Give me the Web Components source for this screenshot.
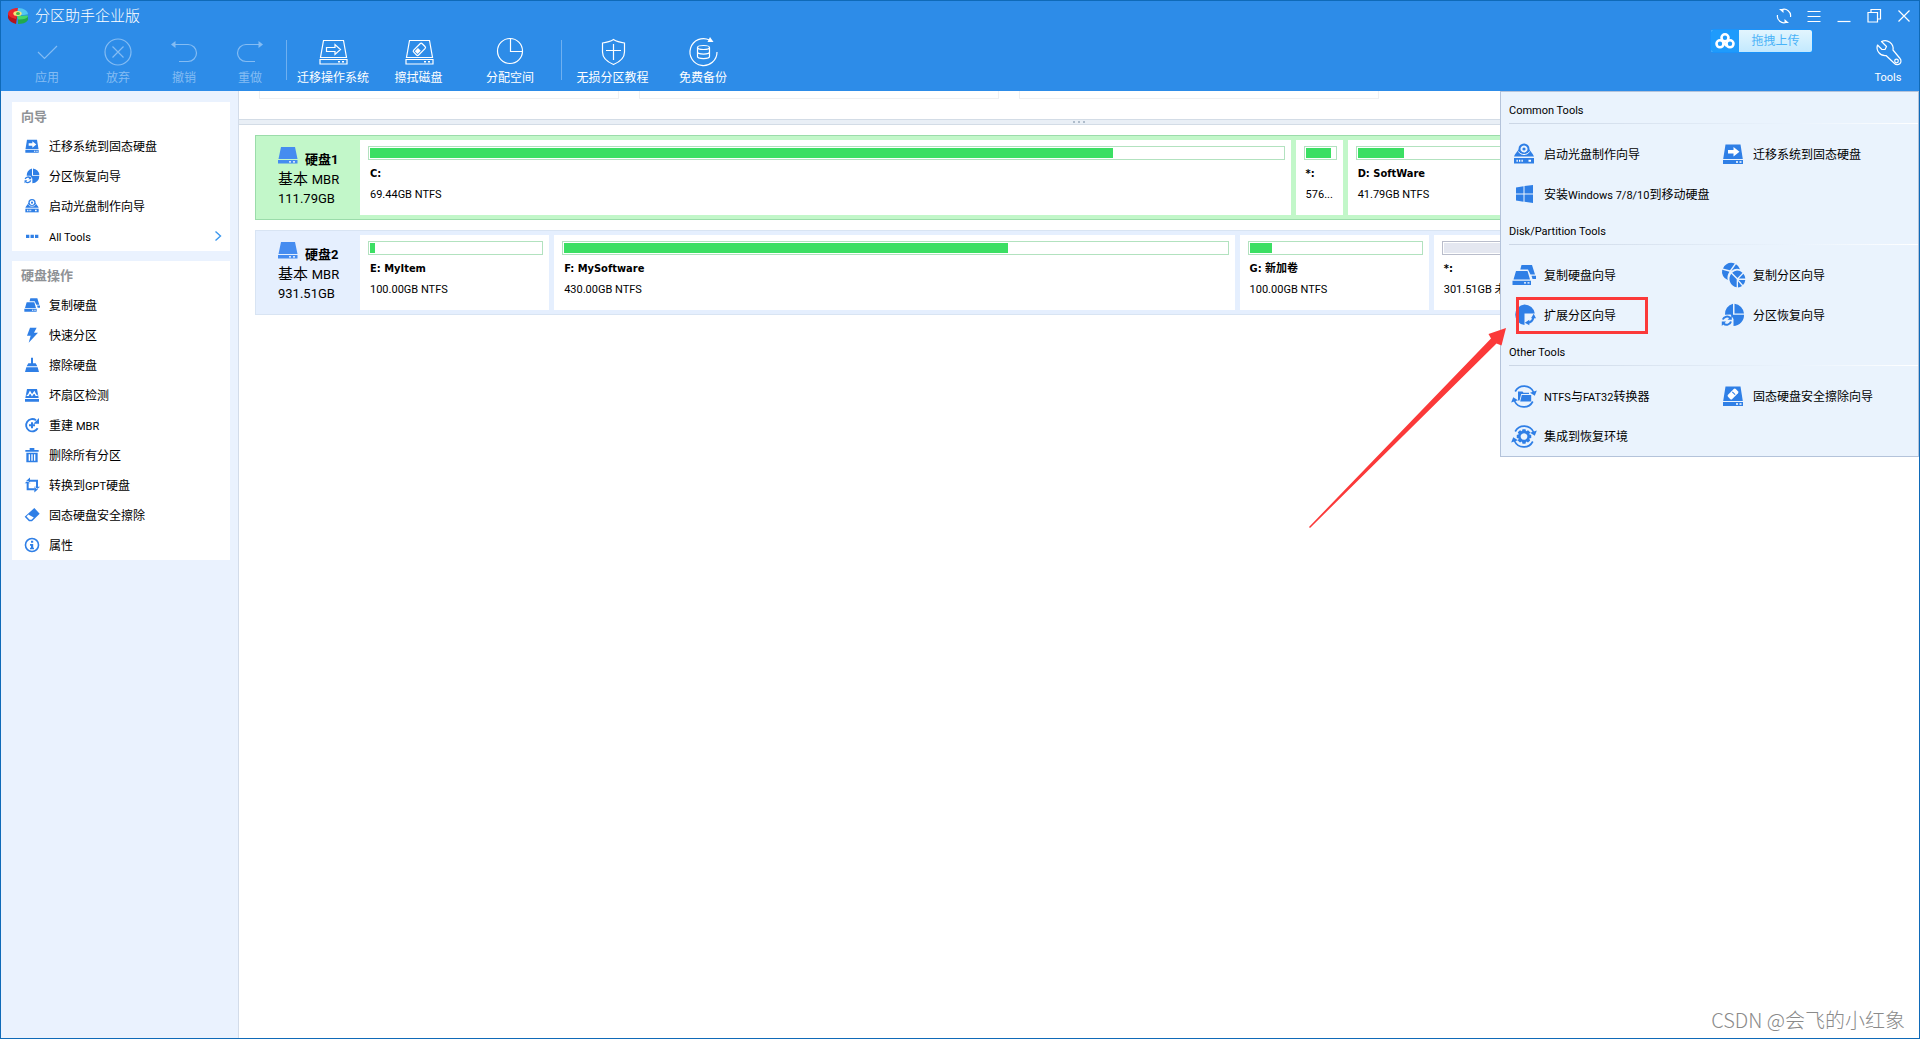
<!DOCTYPE html>
<html lang="zh-CN">
<head>
<meta charset="utf-8">
<title>分区助手企业版</title>
<style>
  html, body { margin: 0; height: 100%; }
  body {
    --blue: #2f7fe6;
    font: 12px/16px Roboto, "Noto Sans CJK SC", sans-serif;
    color: #000;
    background: #fff;
  }
</style>
</head>
<body>
<app-window>
  <app-header slot="header"></app-header>

  <side-panel slot="side" heading="向导">
    <side-item icon="migrate">迁移系统到固态硬盘</side-item>
    <side-item icon="recover">分区恢复向导</side-item>
    <side-item icon="bootdisc">启动光盘制作向导</side-item>
    <side-item icon="dots" more><small>All Tools</small></side-item>
  </side-panel>
  <side-panel slot="side" heading="硬盘操作">
    <side-item icon="copydisk">复制硬盘</side-item>
    <side-item icon="bolt">快速分区</side-item>
    <side-item icon="broom">擦除硬盘</side-item>
    <side-item icon="badsector">坏扇区检测</side-item>
    <side-item icon="rebuild">重建 <small>MBR</small></side-item>
    <side-item icon="trash">删除所有分区</side-item>
    <side-item icon="convert">转换到<small>GPT</small>硬盘</side-item>
    <side-item icon="eraser">固态硬盘安全擦除</side-item>
    <side-item icon="info">属性</side-item>
  </side-panel>

  <disk-row kind="selected" name="硬盘1" size="111.79GB">
    <disk-part style="flex-grow:930" name="C:" size="69.44GB NTFS" used="81.4"></disk-part>
    <disk-part style="flex-grow:47" name="*:" size="576..." used="86"></disk-part>
    <disk-part style="flex-grow:551" name="D: SoftWare" size="41.79GB NTFS" used="8.6"></disk-part>
  </disk-row>
  <disk-row name="硬盘2" size="931.51GB">
    <disk-part style="flex-grow:189" name="E: MyItem" size="100.00GB NTFS" used="3"></disk-part>
    <disk-part style="flex-grow:680" name="F: MySoftware" size="430.00GB NTFS" used="67"></disk-part>
    <disk-part style="flex-grow:189" name="G: 新加卷" size="100.00GB NTFS" used="13"></disk-part>
    <disk-part style="flex-grow:465" name="*:" size="301.51GB 未分配空间" used="100" free></disk-part>
  </disk-row>

  <tools-menu slot="over">
    <menu-section heading="Common Tools">
      <menu-entry icon="bootdisc">启动光盘制作向导</menu-entry>
      <menu-entry icon="migrate">迁移系统到固态硬盘</menu-entry>
      <menu-entry icon="windows">安装<small>Windows 7/8/10</small>到移动硬盘</menu-entry>
    </menu-section>
    <menu-section heading="Disk/Partition Tools">
      <menu-entry icon="copydisk">复制硬盘向导</menu-entry>
      <menu-entry icon="copypart">复制分区向导</menu-entry>
      <menu-entry icon="extend">扩展分区向导</menu-entry>
      <menu-entry icon="recover">分区恢复向导</menu-entry>
    </menu-section>
    <menu-section heading="Other Tools">
      <menu-entry icon="fsconvert"><small>NTFS</small>与<small>FAT32</small>转换器</menu-entry>
      <menu-entry icon="ssderase">固态硬盘安全擦除向导</menu-entry>
      <menu-entry icon="integrate">集成到恢复环境</menu-entry>
    </menu-section>
  </tools-menu>
  <callout-mark slot="over"></callout-mark>
  <water-mark slot="over">CSDN @会飞的小红象</water-mark>
</app-window>

<script>
const HALF = '<path d="M3.200 7.500A10.200 10.200 0 0 1 21.500 8" fill="none" stroke="currentColor" stroke-width="1.700"/><path d="M24.800 6.500l-2 5.300-4.800-3z"/>';
const CYCLE = `${HALF}<g transform="rotate(180 12 12.500)">${HALF}</g>`;
const DISK = '<path d="M4.500 2.500h15l2.300 14.500H2.200zM2 18h20v4H2z"/><path d="M15 19.300h2v1.400h-2zM18.500 19.300h2v1.400h-2z" fill="#fff"/>';
const LINE = 'fill="none" stroke="currentColor" stroke-width="1.200"';
const DRIVE = `<path ${LINE} d="M5.500 3.500h20l3 17h-26zM2 22.500h27v4.500H2z"/><path d="M20 24h2v1.400h-2zM24 24h2v1.400h-2z"/>`;

/* name: [viewBox, markup] */
const ICONS = {
  logo: ['0 0 20 16', `<path fill="#b5131b" d="M0 5v5c1 3 4 5 8 6l1-7z"/><path fill="#e8262d" d="M9 8L10 0C4 0 0 2.500 0 5.500c0 2.500 3 4.500 8 5.500z"/><path fill="#52c7f2" d="M10 0c6 0 10 3 10 6.500L9 8z"/><path fill="#2795db" d="M20 6.500v2l-7 .5-2-1.500z"/><path fill="#43d86a" d="M20 7.500c0 3-4 5-10 4L9 8z"/><path fill="#20a94c" d="M20 8.500v3.500c-2 3-6 4-10 4v-4.500c5 .5 9-1 10-3z"/><ellipse cx="9.500" cy="5.600" rx="4.200" ry="2.500" fill="#f4e57a"/><ellipse cx="10" cy="5.600" rx="2" ry="1.500" fill="#43b649"/>`],
  apply: ['0 0 30 30', `<path ${LINE} d="M6 15l6.500 6.500L25 9"/>`],
  discard: ['0 0 30 30', `<circle ${LINE} cx="15" cy="15" r="13"/><path ${LINE} d="M9.500 9.500l11 11M20.500 9.500l-11 11"/>`],
  undo: ['0 0 30 30', `<path ${LINE} d="M5 7.500h14a8.500 8.500 0 0 1 0 17h-9"/><path d="M2 7.500L6.500 4v7z"/>`],
  redo: ['0 0 30 30', `<path ${LINE} d="M25 7.500H11a8.500 8.500 0 0 0 0 17h9"/><path d="M28 7.500L23.500 4v7z"/>`],
  os: ['0 0 30 30', DRIVE + `<path ${LINE} d="M8.500 10.500h8.500v-3l5.500 5-5.500 5v-3H8.500z"/>`],
  wipe: ['0 0 30 30', DRIVE + `<g transform="rotate(-45 15.500 12.500)"><rect ${LINE} x="9.500" y="8.800" width="12" height="7" rx="1.500"/><path d="M11 10.300h4.500v4H11z"/></g>`],
  pie: ['0 0 30 30', `<circle ${LINE} cx="15" cy="14" r="12.500"/><path ${LINE} d="M15.500 1.500v13H28"/>`],
  shield: ['0 0 30 30', `<path ${LINE} d="M15.500 2.500c3 2 7 3 11 3.500v9c0 6-5 10-11 12.500C9.500 25 4.500 21 4.500 15V6c4-.5 8-1.500 11-3.500zM15.500 7v16M8 13.500h15"/>`],
  backup: ['0 0 30 30', `<path ${LINE} d="M21.500 3A13.500 13.500 0 1 0 29 15"/><path d="M19.500 5L22 0l3.500 5z"/><ellipse ${LINE} cx="15.500" cy="10.500" rx="6" ry="2"/><path ${LINE} d="M9.500 10.500v9c0 2.700 12 2.700 12 0v-9M9.500 15c0 2.700 12 2.700 12 0"/>`],
  wrench: ['0 0 30 30', `<path ${LINE} stroke-linejoin="round" d="M8.500 4.500a8 8 0 0 1 11.500 8.500l7 8.500a3.700 3.700 0 0 1-5.500 5l-8.500-8A8 8 0 0 1 4.500 8l4.500 4.500h3l1.500-3z"/><circle ${LINE} cx="23.500" cy="24" r="1.800"/>`],
  sync: ['0 0 16 16', `<path ${LINE} d="M5.500 1.800A6.500 6.500 0 0 1 14.500 9M10.500 14.200A6.500 6.500 0 0 1 1.500 7"/><path d="M3 1h4.500v4zM13 15H8.500v-4z"/>`],
  menu: ['0 0 16 16', `<path ${LINE} d="M1.500 3.500h13M1.500 8.500h13M1.500 13.500h13"/>`],
  min: ['0 0 16 16', `<path ${LINE} d="M1.500 13.500h13"/>`],
  restore: ['0 0 16 16', `<path ${LINE} d="M2 4.500h9.500V14H2zM5 4V1.500h9.500V11H12"/>`],
  close: ['0 0 16 16', `<path ${LINE} d="M2.500 2.500l11 11M13.500 2.500l-11 11"/>`],
  cloud: ['0 0 20 16', `<g fill="none" stroke="currentColor" stroke-width="2.600"><circle cx="10" cy="4.800" r="3.500"/><circle cx="5" cy="10.800" r="3.500"/><circle cx="15" cy="10.800" r="3.500"/></g><path d="M8 9l4 4" stroke="currentColor" stroke-width="2.600"/>`],
  next: ['0 0 8 12', `<path fill="none" stroke="currentColor" stroke-width="1.400" d="M1.500 1.500L6.500 6l-5 4.500"/>`],
  drive: ['0 0 20 17', `<path d="M3 0h14l2.500 12H.5zM0 13h19.500v3.500H0z"/><path fill="#fff" d="M11 14.200h2v1.200h-2zM15 14.200h2v1.200h-2z"/>`],

  migrate: ['0 0 24 24', DISK + '<path fill="#fff" d="M7 8h5.500V5l6 4.800-6 4.700v-3H7z"/>'],
  ssderase: ['0 0 24 24', DISK + '<g transform="rotate(-45 12 10)"><rect fill="#fff" x="6.500" y="7" width="11" height="6" rx="1.500"/><path d="M12.500 8h1v4h-1z"/></g>'],
  bootdisc: ['0 0 24 24', '<path fill-rule="evenodd" d="M12 1.500a5.500 5.500 0 0 1 5.500 5.500c0 1.800 3.500 4.500 4.500 7.500H2C3 11.500 6.500 8.800 6.500 7A5.500 5.500 0 0 1 12 1.500zM12 3.500a3.500 3.500 0 1 0 .01 0z"/><circle cx="12" cy="7" r="1.600"/><path fill="none" stroke="#fff" d="M6.500 9.500c2 4 9 4 11 0"/><path d="M2 16h20v5.500H2z"/><path fill="#fff" d="M4.500 17.800h1.300v2H4.500zM7 17.800h1.300v2H7zM9.500 17.800h1.300v2H9.500zM16.500 17.800h2.500v2h-2.500z"/>'],
  recover: ['0 0 24 24', '<path d="M13.500.8A10.500 10.500 0 0 1 23 10.500h-9.500zM12 .8v11h11A10.700 10.700 0 0 1 12.500 23v-7l-3-4.500-5.500.2A10.200 10.200 0 0 1 12 .8z"/><path fill="none" stroke="currentColor" stroke-width="2" d="M1.800 16.500a4.500 4.500 0 0 1 7.500-1.500M10 18.500A4.500 4.500 0 0 1 2.500 20.500"/><path d="M10.800 12.500v4.300H6.500zM.8 23v-4.500h4.300z"/>'],
  dots: ['0 0 24 24', '<path d="M3 10h5v5H3zM9.800 10h5v5h-5zM16.500 10h5v5h-5z"/>'],
  copydisk: ['0 0 24 24', '<path d="M9.500 2H20l3 9.500h-4.500L16 6.500H8.300zM19.500 12.800H24V16h-3.500z"/><path d="M4 8h11.500l2.500 8.500H1.500zM.5 17.700h18.500V22H.5z"/><path fill="#fff" d="M12 19.200h2v1.300h-2zM15.500 19.200h2v1.300h-2z"/>'],
  bolt: ['0 0 24 24', '<path d="M9 1h10l-4 7.500h6L7 23.500l3-10.500H4.500z"/>'],
  broom: ['0 0 24 24', '<path d="M10.500 1h3v8.500h4L20 14H4l2.500-4.500h4zM3.500 15.500h17L22.500 22.500h-21z"/>'],
  badsector: ['0 0 24 24', '<path d="M4.500 3h15l2.500 13.500H2zM1.500 18h21v4h-21z"/><path fill="none" stroke="#fff" stroke-width="2" d="M4 12.500h2.500L9 7.500l3 5 3.500-5 2.500 5H20.500"/>'],
  rebuild: ['0 0 24 24', '<path fill="none" stroke="currentColor" stroke-width="2.800" d="M18 4.800A9.300 9.300 0 1 0 20.500 17"/><path d="M22.500 1.500v8.500H14zM10.500 8h3v3h3v3h-3v3h-3v-3h-3v-3h3z"/>'],
  trash: ['0 0 24 24', '<path d="M8.500 1.500h7V4.500H22v2.700H2V4.500h6.500z"/><path fill-rule="evenodd" d="M3.500 8.700h17V23h-17zM7 11v9.500h2V11zm4 0v9.500h2V11zm4 0v9.500h2V11z"/>'],
  convert: ['0 0 24 24', '<path fill="none" stroke="currentColor" stroke-width="3" d="M8 5.500h11.500v11M16 18.500H5.500v-11"/><path d="M9 .8v9.400L3.500 5.500zM15.500 14v9.200L21 18.500zM15 14.500h9L19.500 18.500zM1 9.500h9L5.500 5.500z"/>'],
  eraser: ['0 0 24 24', '<path fill-rule="evenodd" d="M15.500 1.500L23.500 10 12 21.500H7.500L1 14.500zM6.500 11.300L3.800 14.200l4.700 5h2.700l3.500-3.300z"/>'],
  info: ['0 0 24 24', '<circle cx="12" cy="12" r="9.800" fill="none" stroke="currentColor" stroke-width="2.400"/><path d="M10.500 5.500h3.300v3.200h-3.300zM9 10.500h4.800V16H15v2.500H9V16h1.500v-3H9z"/>'],
  windows: ['0 0 24 24', '<path d="M4 5.500l7.500-1.200v7.200H4zM12.500 4.100L21 3v8.500h-8.500zM4 12.500h7.500v7.200L4 18.500zM12.500 12.500H21V21l-8.500-1.200z"/>'],
  copypart: ['0 0 24 24', '<path d="M5.500 1.200a8.500 8.500 0 0 1 8.300-.6L9 7.300 2 5.500A8.500 8.500 0 0 1 5.500 1.200zM15 1.300a8.500 8.500 0 0 1 4 5A9.500 9.500 0 0 0 10.300 8zM1.200 6.800L8.500 8.800A9.500 9.500 0 0 0 6.800 17 8.700 8.700 0 0 1 1.200 6.800z"/><path d="M16 7.500a8.300 8.300 0 0 1 5.500 2.200L16.500 15l-5.300-5.300A8.500 8.500 0 0 1 16 7.500zM10.200 10.700l5.500 5.500V24.300A8.500 8.500 0 0 1 10.200 10.700zM22.400 10.800a8.300 8.300 0 0 1 1.900 4.700L17.800 15.600zM24.300 16.900a8.500 8.500 0 0 1-2.300 5L17.700 17zM17 18.300l4 4.700a8.500 8.500 0 0 1-4 1.400z"/>'],
  extend: ['0 0 24 24', '<path d="M12.500 1.500a10.500 10.500 0 0 1 10.300 9H12.500V22A10.300 10.300 0 0 1 12.500 1.500z"/><path fill="none" stroke="currentColor" stroke-width="2" d="M15.500 20c3.500-.5 5.500-3 6-6"/><path d="M21.700 10.800l2.300 4.500h-5zM12.800 19.800l4.500-3v5.500z"/>'],
  fsconvert: ['0 0 24 24', CYCLE + '<path d="M6 7.500h4.500l1 1.300h5.500V10H9.200L7.500 16.500H6z"/><path d="M9.800 11h9.400v6.500H8.200z"/>'],
  integrate: ['0 0 24 24', CYCLE + '<path fill-rule="evenodd" transform="translate(12 12.500) scale(1.150) translate(-12 -11.900)" d="M10.700 5.500h2.600l.5 1.800 1.700-.9 1.900 1.900-.9 1.700 1.800.5v2.600l-1.800.5.9 1.700-1.900 1.900-1.700-.9-.5 1.800h-2.600l-.5-1.800-1.700.9-1.900-1.900.9-1.700-1.800-.5v-2.600l1.800-.5-.9-1.700 1.900-1.900 1.700.9zM12 9a2.900 2.900 0 1 0 .01 0z"/>']
};

/* Registers an element whose shadow root is filled from render(). */
function define(tag, css, render) {
  customElements.define(tag, class extends HTMLElement {
    constructor() {
      super();
      this.attachShadow({ mode: 'open' });
    }
    connectedCallback() {
      this.shadowRoot.innerHTML = `<style>*{box-sizing:border-box}button{font:inherit;color:inherit;background:none;border:0;padding:0;margin:0;text-align:left}${css}</style>${render(this)}`;
    }
  });
}
const at = (el, name) => el.getAttribute(name) || '';

define('ui-icon', `
  :host { display: block; flex: none; width: 24px; height: 24px; }
  svg { display: block; width: 100%; height: 100%; overflow: visible; fill: currentColor; }`,
  el => { const [box, body] = ICONS[at(el, 'name')]; return `<svg viewBox="${box}" aria-hidden="true">${body}</svg>`; });

define('app-window', `
  :host { display: flex; flex-direction: column; box-sizing: border-box; min-height: 100vh; border: 1px solid #0f6ab8; position: relative; }
  .body { flex: 1; display: flex; }
  aside { flex: none; width: 238px; padding: 11px 8px 11px 11px; display: flex; flex-direction: column; gap: 10px; background: #eaf2fe; border-right: 1px solid #d3dce9; }
  main { flex: 1; min-width: 0; display: flex; flex-direction: column; }
  .upper { height: 28px; padding: 0 20px; display: flex; gap: 20px; }
  .upper i { width: 360px; height: 8px; border: 1px solid #eff0f2; border-top: 0; }
  .split { height: 6px; display: flex; gap: 3px; justify-content: center; align-items: center; background: #e9eff6; border: solid #d3dce6; border-width: 1px 0; }
  .split i { width: 2px; height: 2px; background: #aebccb; }
  .disks { padding: 10px 15px 10px 16px; display: flex; flex-direction: column; gap: 10px; }`,
  () => `<slot name="header"></slot>
    <div class="body"><aside><slot name="side"></slot></aside>
    <main><div class="upper"><i></i><i></i><i></i></div><div class="split"><i></i><i></i><i></i></div>
    <div class="disks"><slot></slot></div></main></div><slot name="over"></slot>`);

define('app-header', `
  :host { display: flex; height: 90px; flex: none; background: #2d8ce8; color: #fff; justify-content: space-between; position: relative; }
  .left { display: flex; flex-direction: column; }
  h1 { margin: 0; height: 30px; padding-left: 7px; display: flex; align-items: center; gap: 7px; font-size: 15px; line-height: 20px; font-weight: 300; }
  h1 ui-icon { width: 20px; height: 16px; }
  nav { margin-left: 11px; padding-top: 6px; display: grid; grid-template-columns: 70px 72px 60px 72px 4px 86px 85px 98px 3px 101px 80px; }
  hr { width: 1px; height: 40px; margin: 3px 0; border: 0; background: #6fb0f0; justify-self: end; }
  hr:first-of-type { justify-self: start; }
  .right { display: flex; flex-direction: column; align-items: flex-end; }
  .win { display: flex; height: 30px; align-items: center; }
  .win button { width: 30px; display: flex; justify-content: center; }
  .win ui-icon { width: 16px; height: 16px; }
  .right tool-button { width: 62px; padding-top: 6px; }
  .upload { position: absolute; top: 28px; right: 106px; display: flex; height: 24px; width: 103px; border: 1px solid #1a93fb; border-radius: 3px; overflow: hidden; background: linear-gradient(#e2f5fe, #c3e9fe); color: #4ab3f8; line-height: 22px; }
  .upload span { flex: 1; text-align: center; }
  .upload ui-icon { width: 28px; height: 22px; padding: 3px 4px; box-sizing: border-box; background: #1e9bfc; color: #fff; }
  small { font-size: 11px; }`,
  () => `<div class="left"><h1><ui-icon name="logo"></ui-icon>分区助手企业版</h1><nav>
    <tool-button icon="apply" off>应用</tool-button><tool-button icon="discard" off>放弃</tool-button>
    <tool-button icon="undo" off>撤销</tool-button><tool-button icon="redo" off>重做</tool-button><hr>
    <tool-button icon="os">迁移操作系统</tool-button><tool-button icon="wipe">擦拭磁盘</tool-button>
    <tool-button icon="pie">分配空间</tool-button><hr>
    <tool-button icon="shield">无损分区教程</tool-button><tool-button icon="backup">免费备份</tool-button></nav></div>
    <div class="right"><div class="win">${['sync:刷新', 'menu:菜单', 'min:最小化', 'restore:还原', 'close:关闭'].map(s => s.split(':')).map(([n, t]) => `<button aria-label="${t}"><ui-icon name="${n}"></ui-icon></button>`).join('')}</div>
    <tool-button icon="wrench"><small>Tools</small></tool-button></div>
    <button class="upload"><ui-icon name="cloud"></ui-icon><span>拖拽上传</span></button>`);

define('tool-button', `
  :host { display: block; }
  button { width: 100%; display: flex; flex-direction: column; align-items: center; gap: 3px; white-space: nowrap; }
  button:disabled { color: #84bcf3; }
  ui-icon { width: 30px; height: 30px; }`,
  el => `<button ${el.hasAttribute('off') ? 'disabled' : ''}><ui-icon name="${at(el, 'icon')}"></ui-icon><slot></slot></button>`);

define('side-panel', `
  :host { display: block; background: #fff; }
  h2 { margin: 0; padding: 0 9px; font-size: 13px; line-height: 29px; color: #8f9296; }`,
  el => `<h2>${at(el, 'heading')}</h2><slot></slot>`);

define('side-item', `
  :host { display: block; }
  button { width: 100%; height: 30px; padding: 0 8px 0 12px; display: flex; align-items: center; gap: 9px; }
  span { flex: 1; padding-top: 2px; }
  ui-icon { width: 16px; height: 16px; color: var(--blue); }
  .next { width: 8px; height: 12px; color: #3b97ee; }
  ::slotted(small) { font-size: 11px; }`,
  el => `<button><ui-icon name="${at(el, 'icon')}"></ui-icon><span><slot></slot></span>${el.hasAttribute('more') ? '<ui-icon class="next" name="next"></ui-icon>' : ''}</button>`);

define('disk-row', `
  :host { display: flex; box-sizing: border-box; height: 85px; padding: 4px; border: 1px solid #d8e4f3; background: #e5effe; }
  :host([kind=selected]) { border-color: #9bdcaa; background: #c2f7c9; }
  .label { flex: none; width: 100px; padding: 7px 0 0 18px; line-height: 18px; font-size: 13px; }
  .top { display: flex; gap: 7px; height: 22px; }
  .top ui-icon { width: 20px; height: 17px; color: #458cf0; }
  b { line-height: 25px; }
  .kind { font-size: 15px; line-height: 20px; }
  .kind small { font-size: 13px; }
  .parts { flex: 1; min-width: 0; display: flex; gap: 5px; }`,
  el => `<div class="label"><div class="top"><ui-icon name="drive"></ui-icon><b>${at(el, 'name')}</b></div><div class="kind">基本 <small>MBR</small></div>${at(el, 'size')}</div><div class="parts"><slot></slot></div>`);

define('disk-part', `
  :host { display: block; flex: 1 1 0; min-width: 0; background: #fff; font-size: 11px; }
  .in { padding: 6px 6px 0 8px; }
  .bar { height: 14px; padding: 1px; border: 1px solid #b2e2bf; }
  .bar i { display: block; height: 10px; background: #3bdf63; }
  :host([free]) .bar { border-color: #b9bdcb; }
  :host([free]) .bar i { background: #e4e7f0; }
  b, span { display: block; padding-left: 2px; white-space: nowrap; }
  b { margin: 6px 0 5px; font-family: "DejaVu Sans Condensed", "Noto Sans CJK SC", sans-serif; }`,
  el => `<div class="in"><div class="bar"><i style="width:${at(el, 'used')}%"></i></div><b>${at(el, 'name')}</b><span>${at(el, 'size')}</span></div>`);

define('tools-menu', `
  :host { display: block; box-sizing: border-box; position: absolute; top: 90px; right: 0; width: 419px; padding: 1px 0 0 8px; border: 1px solid #b4c3da; background: #eaf3fd; }`,
  () => '<slot></slot>');

define('menu-section', `
  :host { display: block; }
  h3 { margin: 0 0 10px; padding: 6px 0 0; height: 31px; font-size: 11px; line-height: 24px; font-weight: 400; border-bottom: 1px solid; border-image: linear-gradient(90deg, #cbd6e5, #eaf3fd 70%, #fff) 1; }
  div { display: grid; grid-template-columns: 209px 1fr; }`,
  el => `<h3>${at(el, 'heading')}</h3><div><slot></slot></div>`);

define('menu-entry', `
  :host { display: block; white-space: nowrap; }
  button { height: 40px; width: 100%; display: flex; align-items: center; gap: 8px; padding-left: 3px; }
  span { padding-top: 2px; }
  ui-icon { color: var(--blue); }
  ::slotted(small) { font-size: 11px; }`,
  el => `<button><ui-icon name="${at(el, 'icon')}"></ui-icon><span><slot></slot></span></button>`);

/* Red frame round the extend-partition entry and the arrow that leads to it. */
define('callout-mark', `
  :host { display: block; position: absolute; top: 296px; right: 270px; width: 340px; height: 232px; pointer-events: none; }
  svg { display: block; }`,
  () => `<svg width="340" height="232" viewBox="0 0 340 232" fill="#fb3939"><path d="M0 230L182 41.500 179.500 37 197 31 192.500 48.500 187.500 46.500 1 231z"/><path fill="none" stroke="#fb3939" stroke-width="3" d="M208.500 1.500h129v34h-129z"/></svg>`);

define('water-mark', `
  :host { display: block; position: absolute; right: 14px; bottom: 6px; font: 300 20px/24px "Noto Sans CJK SC", sans-serif; color: #8a8a8a; }`,
  () => '<slot></slot>');
</script>
</body>
</html>
